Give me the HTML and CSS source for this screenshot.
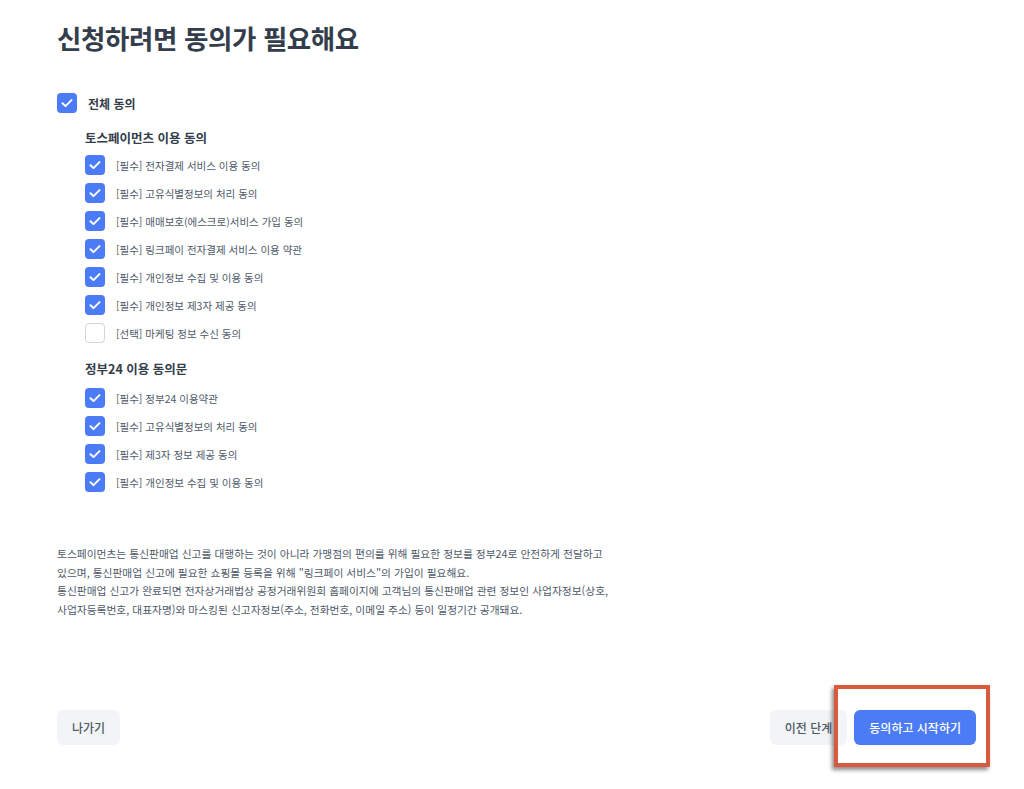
FILE: index.html
```html
<!DOCTYPE html>
<html lang="ko">
<head>
  <meta charset="UTF-8">
  <meta name="viewport" content="width=device-width, initial-scale=1.0">
  <title>동의 - 신청</title>
  <link rel="stylesheet" href="styles.css">
</head>
<body>
  <div class="page">
    <h1>신청하려면 동의가 필요해요</h1>

    <label class="all-agree">
      <span class="box checked"></span>
      <span>전체 동의</span>
    </label>

    <div class="group">
      <h2>토스페이먼츠 이용 동의</h2>
      <ul class="terms">
        <li><span class="box checked"></span>[필수] 전자결제 서비스 이용 동의</li>
        <li><span class="box checked"></span>[필수] 고유식별정보의 처리 동의</li>
        <li><span class="box checked"></span>[필수] 매매보호(에스크로)서비스 가입 동의</li>
        <li><span class="box checked"></span>[필수] 링크페이 전자결제 서비스 이용 약관</li>
        <li><span class="box checked"></span>[필수] 개인정보 수집 및 이용 동의</li>
        <li><span class="box checked"></span>[필수] 개인정보 제3자 제공 동의</li>
        <li><span class="box"></span>[선택] 마케팅 정보 수신 동의</li>
      </ul>

      <h2>정부24 이용 동의문</h2>
      <ul class="terms">
        <li><span class="box checked"></span>[필수] 정부24 이용약관</li>
        <li><span class="box checked"></span>[필수] 고유식별정보의 처리 동의</li>
        <li><span class="box checked"></span>[필수] 제3자 정보 제공 동의</li>
        <li><span class="box checked"></span>[필수] 개인정보 수집 및 이용 동의</li>
      </ul>
    </div>

    <p class="notice">
      토스페이먼츠는 통신판매업 신고를 대행하는 것이 아니라 가맹점의 편의를 위해 필요한 정보를 정부24로 안전하게 전달하고<br>
      있으며, 통신판매업 신고에 필요한 쇼핑몰 등록을 위해 "링크페이 서비스"의 가입이 필요해요.<br>
      통신판매업 신고가 완료되면 전자상거래법상 공정거래위원회 홈페이지에 고객님의 통신판매업 관련 정보인 사업자정보(상호,<br>
      사업자등록번호, 대표자명)와 마스킹된 신고자정보(주소, 전화번호, 이메일 주소) 등이 일정기간 공개돼요.
    </p>

    <div class="footer">
      <button class="btn gray">나가기</button>
      <div class="right">
        <button class="btn gray">이전 단계</button>
        <button class="btn primary">동의하고 시작하기</button>
      </div>
      <div class="highlight"></div>
    </div>
  </div>
</body>
</html>
```

FILE: styles.css
```css
* {
  box-sizing: border-box;
}
body {
  margin: 0;
  background: #fff;
  font-family: "Noto Sans CJK KR", "Noto Sans", sans-serif;
  color: #333d4b;
}
.page {
  height: 789px;
  padding: 18px 48px 44px 57px;
  display: flex;
  flex-direction: column;
}
h1 {
  margin: 0;
  font-size: 26.5px;
  line-height: 40px;
  font-weight: 700;
  color: #333d4b;
  letter-spacing: -0.4px;
}
.box {
  width: 20px;
  height: 20px;
  border-radius: 4px;
  border: 1.5px solid #d1d6db;
  background: #fff;
  flex-shrink: 0;
}
.box.checked {
  border: none;
  background: #4b7bf5 url("data:image/svg+xml,%3Csvg xmlns='http://www.w3.org/2000/svg' viewBox='0 0 20 20'%3E%3Cpath d='M5.5 10.2l3 2.9 6-6' fill='none' stroke='white' stroke-width='2' stroke-linecap='round' stroke-linejoin='round'/%3E%3C/svg%3E") center/20px 20px no-repeat;
}
.all-agree {
  display: flex;
  align-items: center;
  gap: 11px;
  margin-top: 35px;
  font-size: 12px;
  font-weight: 700;
  color: #333d4b;
}
.group {
  padding-left: 28px;
  margin-top: 15px;
}
h2 {
  margin: 0;
  font-size: 12.5px;
  line-height: 20px;
  font-weight: 700;
  color: #333d4b;
}
.terms {
  list-style: none;
  margin: 3px 0 12px;
  padding: 0;
}
.terms:last-child {
  margin: 5px 0 0;
}
.terms li {
  display: flex;
  align-items: center;
  gap: 11px;
  height: 28px;
  font-size: 10.5px;
  color: #4e5968;
}
.notice {
  margin: 49px 0 0;
  font-size: 10.75px;
  line-height: 18.5px;
  color: #4e5968;
}
.footer {
  margin-top: auto;
  display: flex;
  justify-content: space-between;
  align-items: center;
  position: relative;
}
.right {
  display: flex;
  gap: 7px;
}
.btn {
  height: 35px;
  padding: 0 15px;
  border: none;
  border-radius: 6px;
  font-family: inherit;
  font-size: 12px;
  font-weight: 500;
  cursor: pointer;
}
.btn.gray {
  background: #f2f4f6;
  color: #4e5968;
}
.btn.primary {
  background: #4b7bf5;
  color: #fff;
}
.highlight {
  position: absolute;
  right: -14px;
  top: -25px;
  width: 156px;
  height: 82px;
  border: 4px solid #d95b3f;
  box-shadow: -2px 3px 4px rgba(0, 0, 0, 0.45);
  pointer-events: none;
}
```
